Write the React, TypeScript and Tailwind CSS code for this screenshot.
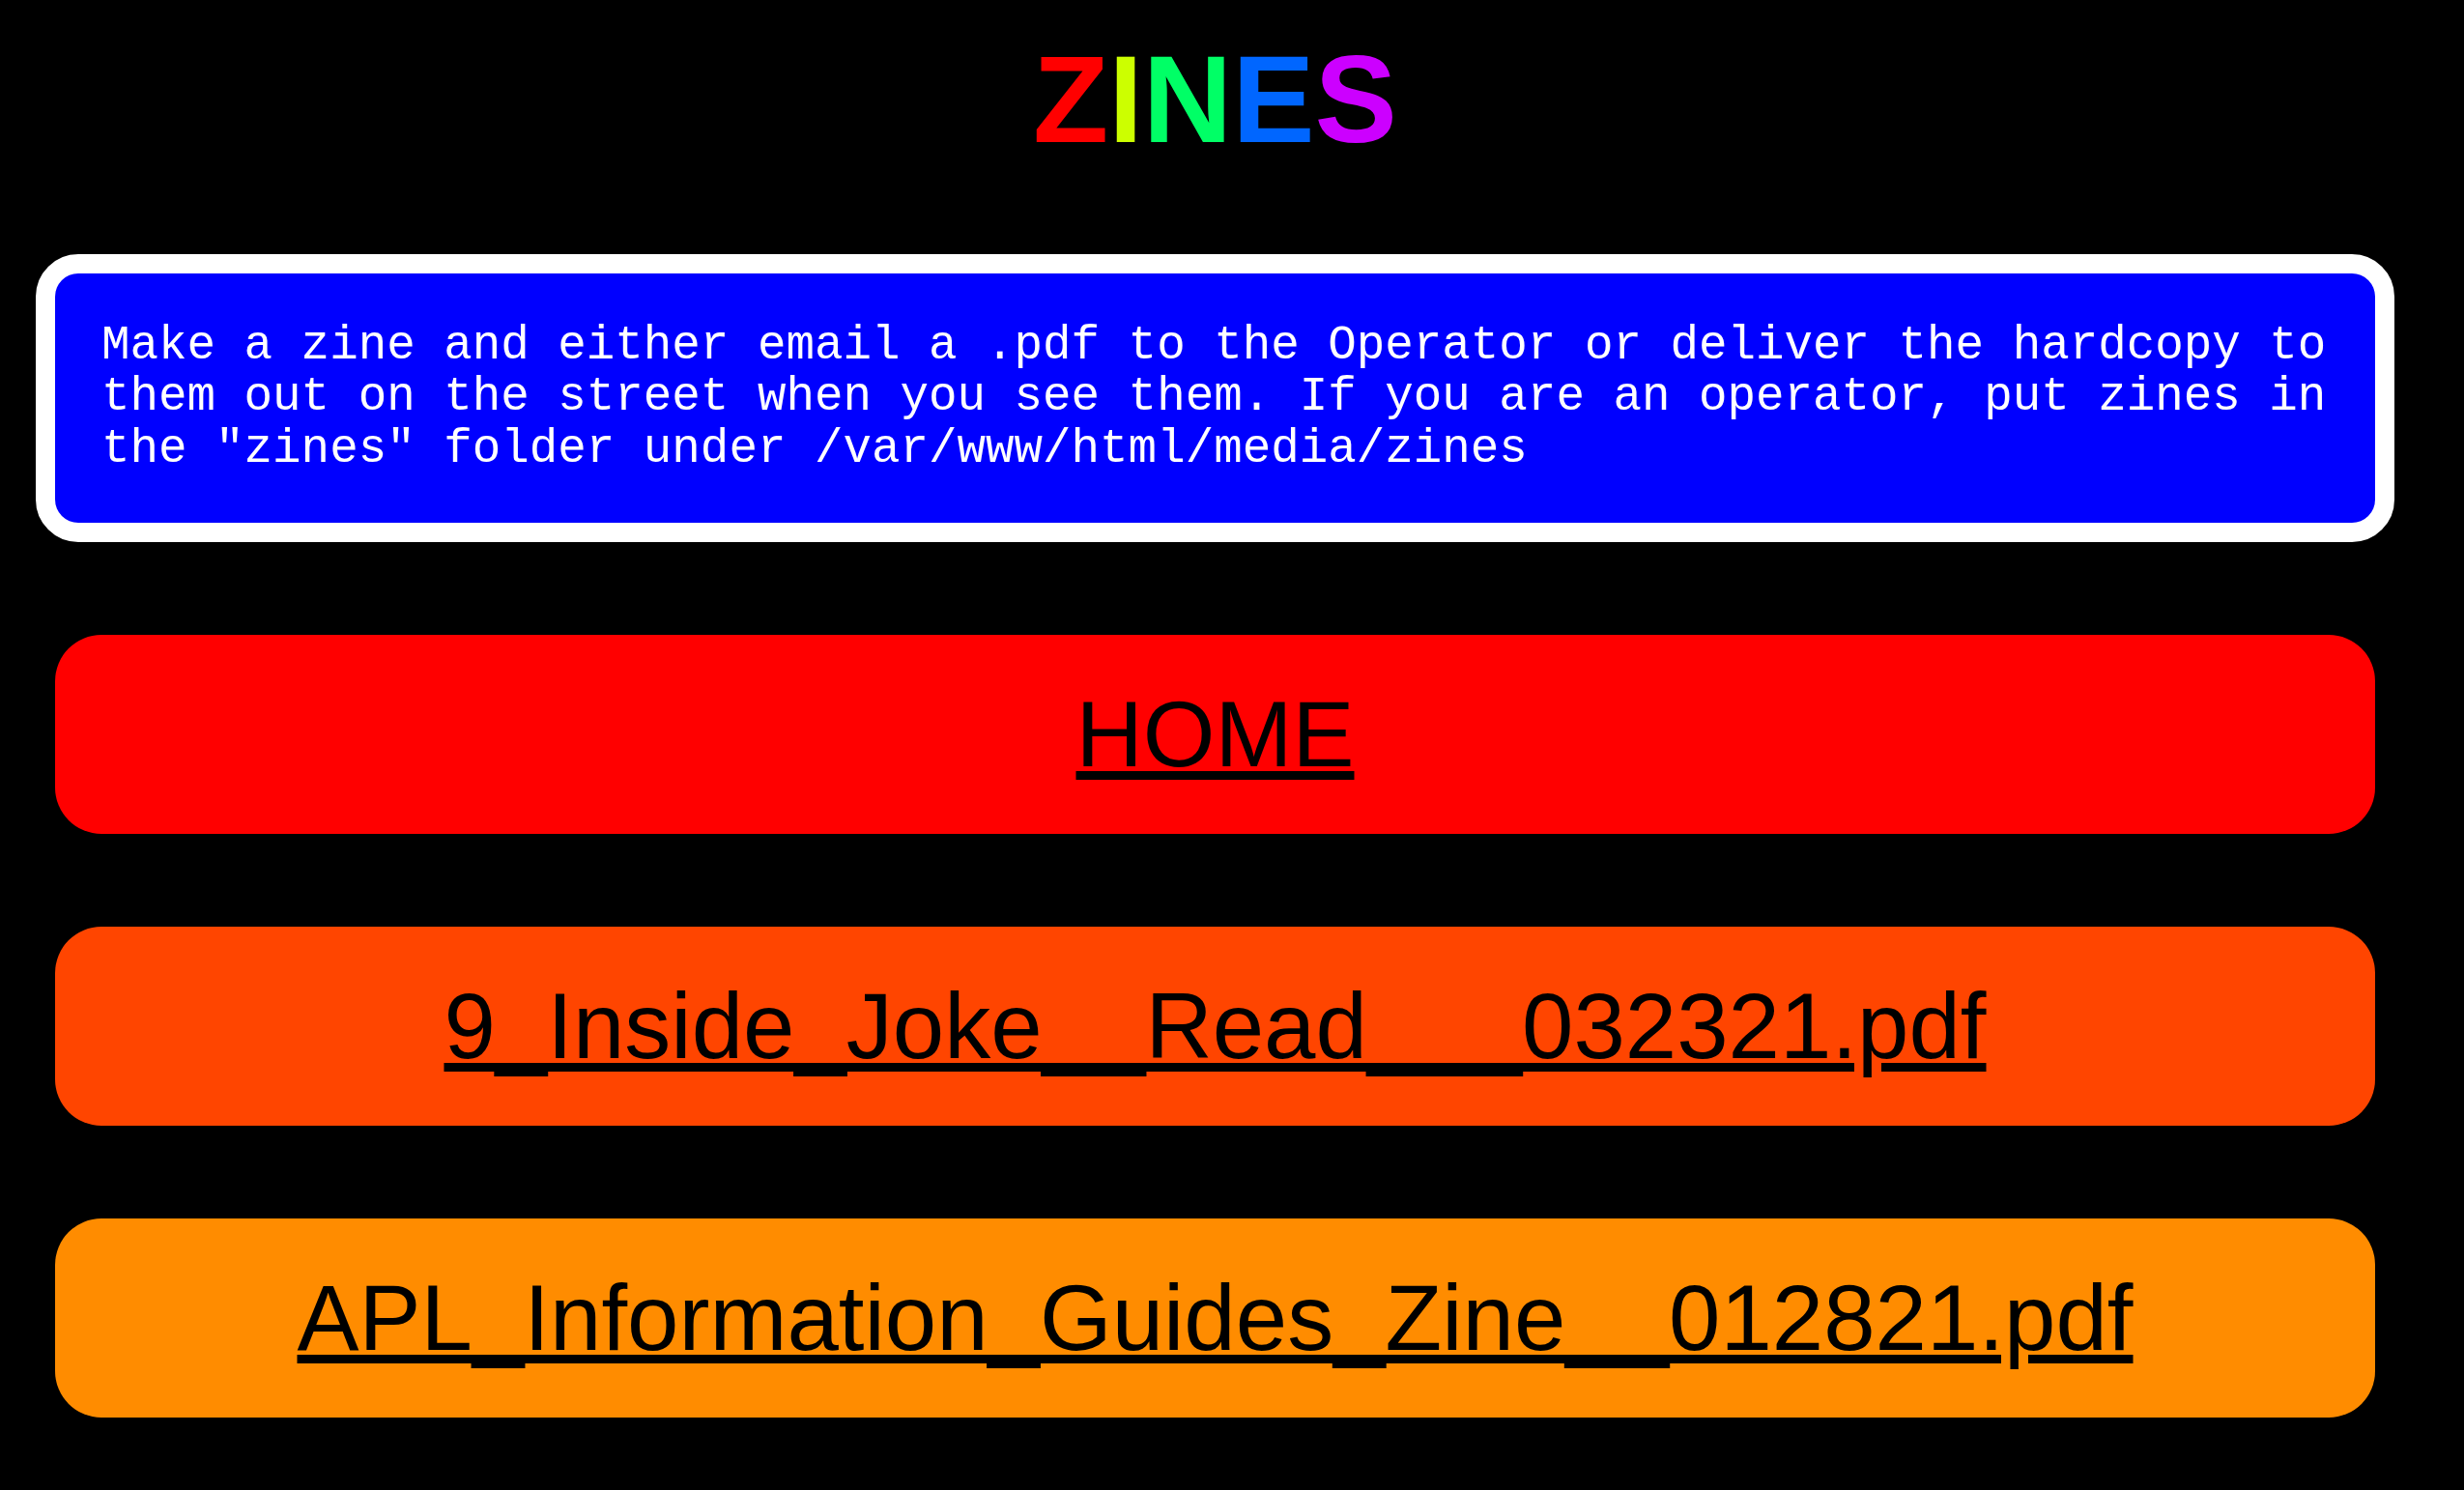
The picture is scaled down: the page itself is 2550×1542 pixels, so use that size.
import React from 'react';

// link rows under the intro box
const links = [
    {label: 'HOME', bg: 'bg-[#ff0000]'},
    {label: '9_Inside_Joke__Read___032321.pdf', bg: 'bg-[#ff4500]'},
    {label: 'APL_Information_Guides_Zine__012821.pdf', bg: 'bg-[#ff8c00]'},
];

const Title = () => {
    return (
        <h1 className="pt-[39px] mb-[96px] text-center text-[128px] leading-none font-bold font-['Liberation_Sans',Arial,sans-serif]">
            <span className="text-[#ff0000]">Z</span>
            <span className="text-[#ccff00]">I</span>
            <span className="text-[#00ff66]">N</span>
            <span className="text-[#0066ff]">E</span>
            <span className="text-[#cc00ff]">S</span>
        </h1>
    );
};

const App = () => {
    return (
        <div className="min-h-screen bg-black pl-[57px] pr-[92px] pb-[96px]">
            <Title />
            <div className="-mx-[20px] border-[20px] border-white rounded-[44px] bg-white">
                <div className="bg-[#0000ff] rounded-[24px] px-[48px] py-[49px]">
                    <p className="text-white text-[49.2px] leading-[53.3px] font-['Liberation_Mono','Courier_New',monospace]">
                        Make a zine and either email a .pdf to the Operator or deliver the hardcopy to them out on the street when you see them. If you are an operator, put zines in the "zines" folder under /var/www/html/media/zines
                    </p>
                </div>
            </div>
            <div className="flex flex-col gap-[96px] mt-[96px]">
                {links.map((l) => (
                    <div key={l.label} className={`${l.bg} rounded-[48px] py-12 text-center text-[96px] leading-[normal] font-['Liberation_Sans',Arial,sans-serif]`}>
                        <a href="#" className="text-black underline">
                            {l.label}
                        </a>
                    </div>
                ))}
            </div>
        </div>
    );
};

export default App;
